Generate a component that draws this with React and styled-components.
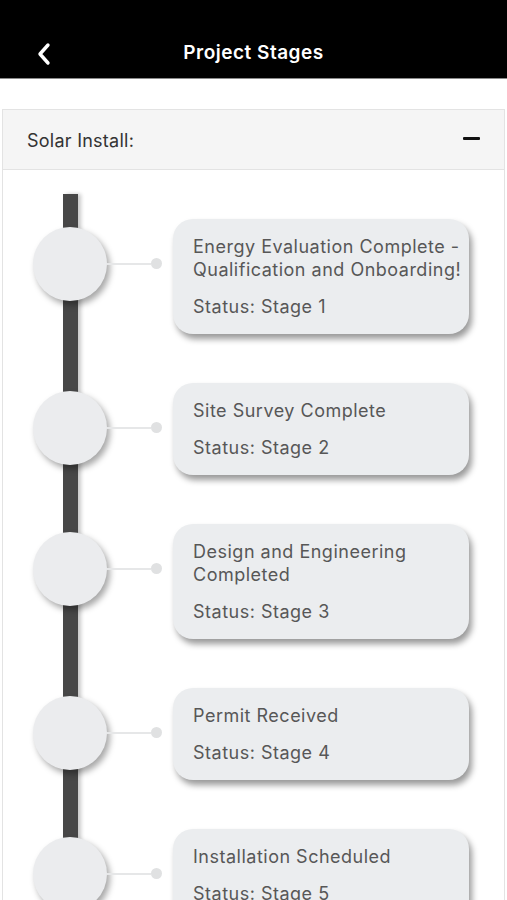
import React from 'react'
import styled, { createGlobalStyle } from 'styled-components'

const GlobalStyle = createGlobalStyle`
  body {
    margin: 0;
    background: #fff;
    font-family: "Inter", "Liberation Sans", Arial, sans-serif;
  }
`

const stages = [
  { title: 'Energy Evaluation Complete - Qualification and Onboarding!', stage: 1 },
  { title: 'Site Survey Complete', stage: 2 },
  { title: 'Design and Engineering Completed', stage: 3 },
  { title: 'Permit Received', stage: 4 },
  { title: 'Installation Scheduled', stage: 5 },
]

const Page = styled.div`
  width: 507px;
  height: 900px;
  overflow: hidden;
`

const TopBar = styled.header`
  height: 79px;
  box-sizing: border-box;
  padding-top: 26px;
  background: #000;
  border-bottom: 1px solid #8a8a8a;
  display: flex;
  align-items: center;
  justify-content: center;
  position: relative;

  h1 {
    margin: 0;
    color: #fff;
    font-size: 19px;
    font-weight: 600;
    letter-spacing: 0.5px;
  }
`

const BackButton = styled.button`
  position: absolute;
  left: 34px;
  top: 40px;
  background: none;
  border: 0;
  padding: 2px;
  display: flex;
`

const Panel = styled.section`
  margin: 30px 2px 0;
  border: 1px solid #e3e3e3;
  border-bottom: 0;
`

const PanelHeader = styled.div`
  height: 59px;
  background: #f5f5f5;
  border-bottom: 1px solid #e3e3e3;
  display: flex;
  align-items: center;
  justify-content: space-between;
  padding: 0 24px;
  font-size: 18px;
  letter-spacing: 0.25px;
  color: #333;

  span {
    margin-top: 2px;
  }
`

const Minus = styled.i`
  width: 17px;
  height: 3px;
  border-radius: 1px;
  background: #111;
  margin-top: -3px;
`

const Timeline = styled.div`
  position: relative;
  padding: 49px 0 40px;
  display: flex;
  flex-direction: column;
  gap: 49px;

  &::before {
    content: '';
    position: absolute;
    left: 60px;
    top: 24px;
    bottom: 0;
    width: 15px;
    background: #474747;
    box-shadow: 3px 0 4px rgba(0, 0, 0, 0.22);
  }
`

const Row = styled.div`
  position: relative;
  display: flex;
  align-items: flex-start;
  padding-left: 30px;
`

const Node = styled.div`
  width: 74px;
  height: 74px;
  margin-top: 8px;
  border-radius: 50%;
  background: #ebecee;
  box-shadow: 3px 4px 6px rgba(0, 0, 0, 0.35);
  flex-shrink: 0;
`

const Connector = styled.div`
  width: 55px;
  margin-top: 39px;
  display: flex;
  align-items: center;
  flex-shrink: 0;

  &::before {
    content: '';
    flex: 1;
    height: 2px;
    background: #e6e7e8;
  }

  &::after {
    content: '';
    width: 11px;
    height: 11px;
    border-radius: 50%;
    background: #e0e1e2;
  }
`

const Card = styled.div`
  width: 296px;
  margin-left: 11px;
  box-sizing: border-box;
  padding: 16px 4px 16px 20px;
  border-radius: 20px;
  background: #ebedef;
  box-shadow: 3px 5px 6px rgba(0, 0, 0, 0.4);
  color: #575757;
  font-size: 18px;
  line-height: 23px;
  letter-spacing: 0.5px;
`

const CardTitle = styled.div`
  margin-bottom: 14px;
`

const Chevron = () => (
  <svg width="16" height="24" viewBox="0 0 16 24">
    <polyline points="12,3 4,12 12,21" fill="none" stroke="#fff" strokeWidth="3.4" strokeLinecap="round" strokeLinejoin="round" />
  </svg>
)

export default function App() {
  return (
    <Page>
      <GlobalStyle />
      <TopBar>
        <BackButton aria-label="Back">
          <Chevron />
        </BackButton>
        <h1>Project Stages</h1>
      </TopBar>
      <Panel>
        <PanelHeader>
          <span>Solar Install:</span>
          <Minus />
        </PanelHeader>
        <Timeline>
          {stages.map((s) => (
            <Row key={s.stage}>
              <Node />
              <Connector />
              <Card>
                <CardTitle>{s.title}</CardTitle>
                <div>Status: Stage {s.stage}</div>
              </Card>
            </Row>
          ))}
        </Timeline>
      </Panel>
    </Page>
  )
}
